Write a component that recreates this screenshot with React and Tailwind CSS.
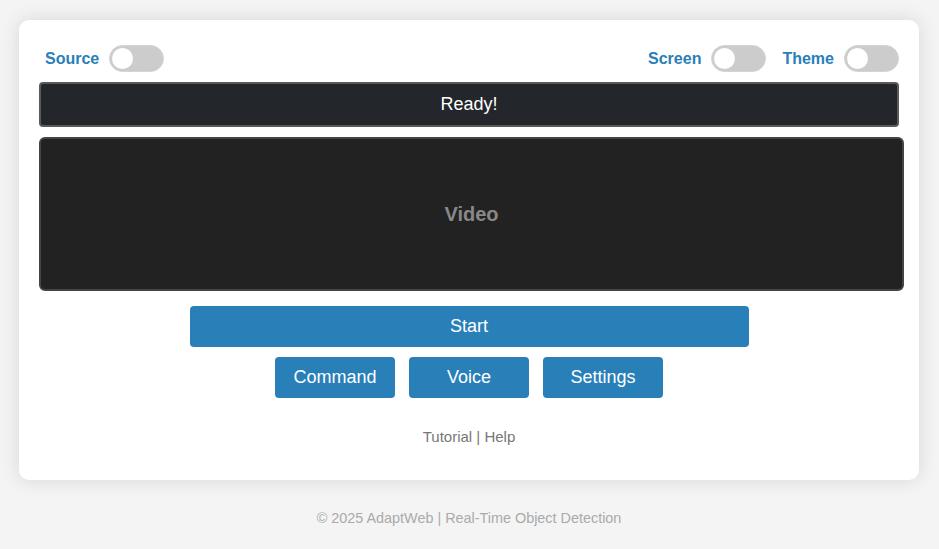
import { useState } from 'react';

// Small pill switch used in the top bar
function Toggle({ label, on, onChange }) {
  return (
    <div className="flex items-center gap-[10px]">
      <span className="text-[16px] font-bold text-[#2980b9]">{label}</span>
      <button
        onClick={() => onChange(!on)}
        className={`relative w-[55px] h-[27px] rounded-full border border-[#d4d4d4] ${
          on ? 'bg-[#2980b9]' : 'bg-[#cccccc]'
        }`}
      >
        <span
          className={`absolute top-[2px] w-[21px] h-[21px] rounded-full bg-white ${
            on ? 'left-[30px]' : 'left-[2px]'
          }`}
        />
      </button>
    </div>
  );
}

export default function App() {
  const [source, setSource] = useState(false);
  const [screen, setScreen] = useState(false);
  const [theme, setTheme] = useState(false);

  return (
    <div
      className="min-h-[549px] bg-[#f4f4f4] pt-[20px] px-[19px]"
      style={{ fontFamily: '"Liberation Sans", Arial, sans-serif' }}
    >
      <div className="w-[900px] bg-white rounded-[10px] shadow-[0_0_20px_rgba(0,0,0,0.12)] p-[20px]">
        {/* Toggles */}
        <div className="flex items-start justify-between pl-[6px] pt-[5px] h-[37px] mb-[5px]">
          <Toggle label="Source" on={source} onChange={setSource} />
          <div className="flex items-center gap-[16px]">
            <Toggle label="Screen" on={screen} onChange={setScreen} />
            <Toggle label="Theme" on={theme} onChange={setTheme} />
          </div>
        </div>

        {/* Status */}
        <div className="w-[860px] h-[45px] flex items-center justify-center bg-[#23262a] border-2 border-[#5a5a5a] rounded-[4px] text-white text-[18px]">
          Ready!
        </div>

        {/* Video area */}
        <div className="mt-[10px] w-[865px] h-[154px] flex items-center justify-center bg-[#222222] border-2 border-[#444444] rounded-[6px] text-[#888888] text-[20px] font-bold">
          Video
        </div>

        {/* Controls */}
        <div className="flex flex-col items-center">
          <button className="mt-[15px] w-[559px] h-[41px] bg-[#2980b9] text-white text-[18px] rounded-[4px]">
            Start
          </button>
          <div className="mt-[10px] flex gap-[14px]">
            <button className="w-[120px] h-[41px] bg-[#2980b9] text-white text-[18px] rounded-[4px]">Command</button>
            <button className="w-[120px] h-[41px] bg-[#2980b9] text-white text-[18px] rounded-[4px]">Voice</button>
            <button className="w-[120px] h-[41px] bg-[#2980b9] text-white text-[18px] rounded-[4px]">Settings</button>
          </div>
          <div className="mt-[30px] mb-[14px] text-[15px] leading-[18px] text-[#777777]">
            Tutorial | Help
          </div>
        </div>
      </div>

      <footer className="pt-[30px] text-center text-[14.4px] leading-[16px] text-[#aaaaaa] w-[900px]">
        © 2025 AdaptWeb | Real-Time Object Detection
      </footer>
    </div>
  );
}
